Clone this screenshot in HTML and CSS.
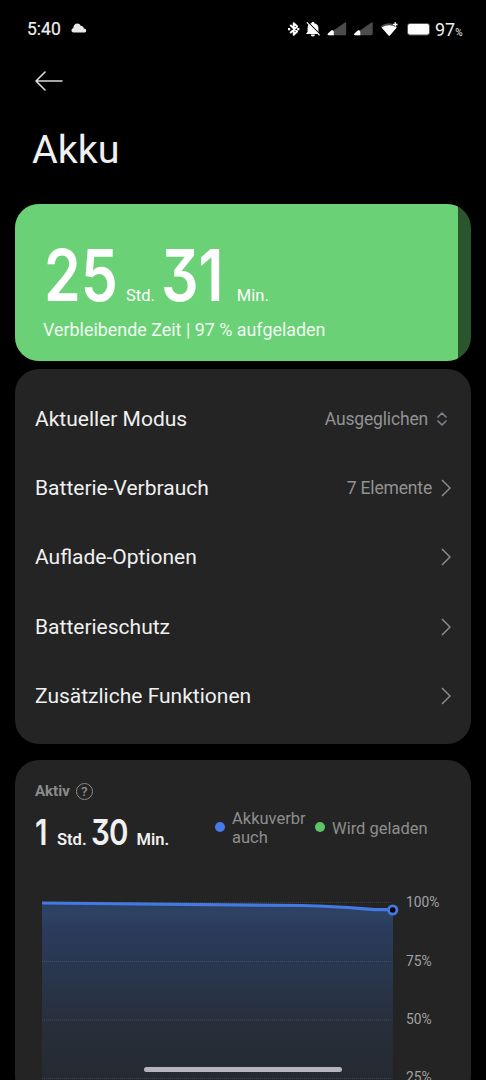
FILE: index.html
```html
<!DOCTYPE html>
<html lang="de">
<head>
    <meta charset="UTF-8">
    <meta name="viewport" content="width=device-width, initial-scale=1.0">
    <title>Akku</title>
    <link rel="stylesheet" href="styles.css">
</head>
<body>
    <div class="statusbar">
        <span class="time">5:40</span>
        <svg class="cloud" width="16" height="10" viewBox="0 0 16 10">
            <path d="M2.500 9.500C-.3 9.500 0 5.800 2.200 5.300 2.500 2 4 .5 6.300.5c1.700 0 2.700.9 3.300 2.300 2 0 3 1 3.200 2.800 3.200.2 3.200 3.900.2 3.900z" fill="#e8e8e8"/>
        </svg>
        <svg class="status-icons" width="146" height="18" viewBox="0 0 146 18">
            <!-- bluetooth -->
            <path d="M2.200 5l7 6.500L5.700 14.800V3.200L9.200 6.500l-7 6.500" fill="none" stroke="#fff" stroke-width="1.900" stroke-linejoin="round"/>
            <path d="M0 8h2.200v2.200H0zM9.200 8h2.200v2.200H9.200z" fill="#fff"/>
            <!-- muted bell -->
            <path d="M24.900 1.700a1.500 1.500 0 0 1 1.500 1.500c2.700.6 4 2.400 4 4.800v3.700l1.600 2.300H18l1.600-2.300V8c0-2.400 1.100-4.200 3.800-4.800a1.500 1.500 0 0 1 1.500-1.500zM22.800 14.500h4.200a2.100 2.100 0 0 1-4.200 0z" fill="#fff"/>
            <path d="M19.700 1.800l13 13" stroke="#000" stroke-width="1.100"/>
            <path d="M18.800 2.400l12.800 13" stroke="#fff" stroke-width="1.200"/>
            <!-- signal -->
            <path d="M40 14.200L57 2.500q1.200-.8 1.200.8V14q0 1.200-1.200 1.200H41q-2 0-1-1z" fill="#4c4c4c"/>
            <path d="M40.200 13.300l3.300-3q2.300-.5 2.300 1.700v3.200H41q-2.500 0-.8-1.900z" fill="#fff"/>
            <path d="M66.500 14.200L83.500 2.500q1.200-.8 1.200.8V14q0 1.200-1.200 1.200h-16q-2 0-1-1z" fill="#4c4c4c"/>
            <path d="M66.700 13.300l3.300-3q2.300-.5 2.300 1.700v3.200h-4.800q-2.500 0-.8-1.900z" fill="#fff"/>
            <!-- wifi -->
            <path d="M92.500 6.200Q101 .5 109 6.200L101.900 15q-.7.700-1.400 0z" fill="#4c4c4c"/>
            <path d="M93.600 7.500q7.500-4.500 15.200 0L101.900 15.400q-.7.700-1.400 0z" fill="#fff"/>
            <path d="M107.300 2v4.500M105 4.500h5" stroke="#000" stroke-width="2.200"/>
            <path d="M107.300 2.200v4.500M105 4.500h4.500" stroke="#fff" stroke-width="1.400"/>
            <!-- battery -->
            <rect x="119" y="2.900" width="23" height="12.600" rx="3.500" fill="#555"/>
            <rect x="120" y="4" width="21" height="10.400" rx="1.800" fill="#fff"/>
        </svg>
        <span class="charge">97<small>%</small></span>
    </div>

    <header>
        <svg class="back" width="28" height="20" viewBox="0 0 28 20">
            <path d="M10 1L1 10l9 9M1 10h26" fill="none" stroke="#dcdcdc" stroke-width="1.600" stroke-linecap="round" stroke-linejoin="round"/>
        </svg>
        <h1>Akku</h1>
    </header>

    <section class="battery">
        <div class="level">
            <div class="remaining">
                <span class="digits hours">25</span>
                <span class="unit">Std.</span>
                <span class="digits minutes">31</span>
                <span class="unit">Min.</span>
            </div>
            <p>Verbleibende Zeit | 97 % aufgeladen</p>
        </div>
    </section>

    <ul class="card menu">
        <li>
            <span>Aktueller Modus</span>
            <span class="value">Ausgeglichen</span>
            <svg class="updown" width="10" height="14" viewBox="0 0 10 14">
                <path d="M1 5l4-4 4 4M1 9l4 4 4-4" fill="none" stroke="#81838f" stroke-width="1.600" stroke-linecap="round" stroke-linejoin="round"/>
            </svg>
        </li>
        <li>
            <span>Batterie-Verbrauch</span>
            <span class="value">7 Elemente</span>
            <svg class="chevron" width="10" height="18" viewBox="0 0 10 18"><path d="M1 1l8 8-8 8"/></svg>
        </li>
        <li>
            <span>Auflade-Optionen</span>
            <svg class="chevron" width="10" height="18" viewBox="0 0 10 18"><path d="M1 1l8 8-8 8"/></svg>
        </li>
        <li>
            <span>Batterieschutz</span>
            <svg class="chevron" width="10" height="18" viewBox="0 0 10 18"><path d="M1 1l8 8-8 8"/></svg>
        </li>
        <li>
            <span>Zusätzliche Funktionen</span>
            <svg class="chevron" width="10" height="18" viewBox="0 0 10 18"><path d="M1 1l8 8-8 8"/></svg>
        </li>
    </ul>

    <section class="card usage">
        <div class="label">
            <span>Aktiv</span>
            <span class="help">?</span>
        </div>
        <div class="summary">
            <div class="active-time">
                <span class="digits one">1</span>
                <span class="unit">Std.</span>
                <span class="digits two">30</span>
                <span class="unit">Min.</span>
            </div>
            <div class="legend">
                <i class="dot blue"></i>
                <span class="used">Akkuverbr<br>auch</span>
                <i class="dot green"></i>
                <span>Wird geladen</span>
            </div>
        </div>
        <svg class="chart" width="456" height="200" viewBox="15 880 456 200">
            <defs>
                <linearGradient id="fill" gradientUnits="userSpaceOnUse" x1="0" y1="903" x2="0" y2="1090">
                    <stop offset="0" stop-color="#2b3e62"/>
                    <stop offset=".06" stop-color="#2e4364"/>
                    <stop offset=".13" stop-color="#2a3b5c"/>
                    <stop offset=".35" stop-color="#29374e"/>
                    <stop offset=".65" stop-color="#272f3b"/>
                    <stop offset="1" stop-color="#252930"/>
                </linearGradient>
            </defs>
            <path d="M42 903L302 905.500Q335 906 365 909L393 910V1080H42z" fill="url(#fill)"/>
            <g stroke="#fff" stroke-opacity=".12" stroke-dasharray="1 1">
                <path d="M42 902.500h350M42 961.500h350M42 1020h350M42 1078.500h350"/>
            </g>
            <path d="M42 903L302 905.500Q335 906.300 362 908.700L375 909.700H393" fill="none" stroke="#4479e2" stroke-width="3.200"/>
            <circle cx="392.700" cy="910" r="4.200" fill="#05070d" stroke="#4479e2" stroke-width="2.800"/>
            <g class="scale">
                <text x="406" y="906.500">100%</text>
                <text x="406" y="965.500">75%</text>
                <text x="406" y="1024">50%</text>
                <text x="406" y="1082">25%</text>
            </g>
        </svg>
    </section>

    <div class="home-bar"></div>
</body>
</html>
```
FILE: styles.css
```css
* {
    box-sizing: border-box;
}
html {
    overflow: hidden;
    background: #000;
}
body {
    margin: 0;
    height: 1080px;
    overflow: hidden;
    position: relative;
    background: #000;
    color: #f0f0f0;
    font-family: Roboto, sans-serif;
}
.statusbar {
    display: flex;
    align-items: center;
    height: 58px;
    padding-left: 27px;
    font-size: 18px;
    color: #eee;
}
.cloud {
    margin-top: -2px;
}
.time {
    width: 44px;
    font-size: 17.5px;
    -webkit-text-stroke: .2px #eee;
}
.status-icons {
    margin-left: 201px;
}
.charge {
    margin-left: 1px;
}
.charge small {
    font-size: 10px;
}
header {
    height: 146px;
    padding: 13px 0 0 33px;
}
.back {
    display: block;
    margin-left: 2px;
}
h1 {
    margin: 35px 0 0 -1px;
    font-size: 39.5px;
    line-height: 48px;
    font-weight: 400;
}
.battery {
    height: 157px;
    margin: 0 15px 8px;
    border-radius: 24px;
    overflow: hidden;
    background: #2b552d;
}
.level {
    width: 443px;
    height: 100%;
    padding: 39px 0 0 28px;
    background: #6bd177;
    color: #fff;
}
.level p {
    margin: 12px 0 0;
    font-size: 17.9px;
    line-height: 22px;
    color: #f0fbf1;
}
.remaining,
.active-time {
    display: flex;
    align-items: baseline;
}
.remaining {
    height: 64px;
    line-height: 64px;
    font-size: 16.5px;
}
/* narrow numerals with a flat-topped three */
.digits {
    font-family: Inter, sans-serif;
    font-feature-settings: "cv09";
    transform: scaleX(.83);
    transform-origin: 0 0;
    white-space: nowrap;
}
.remaining .digits {
    font-size: 71px;
    font-weight: 600;
}
.hours {
    width: 82px;
    margin-left: 1px;
}
.minutes {
    width: 76px;
    margin-left: 6px;
}
.card {
    margin: 0 15px;
    border-radius: 24px;
    background: #242424;
}
.menu {
    height: 375px;
    padding: 15px 20px 0;
    list-style: none;
    font-size: 21px;
}
.menu li {
    display: flex;
    align-items: center;
    height: 69.3px;
}
.menu li span:first-child {
    margin-right: auto;
}
.value {
    font-size: 17.5px;
    letter-spacing: -.17px;
    color: #929292;
    margin-right: 9px;
}
.updown {
    margin-right: 4px;
}
.chevron {
    fill: none;
    stroke: #8c8c8c;
    stroke-width: 1.5;
}
.usage {
    height: 340px;
    margin-top: 16px;
}
.label {
    display: flex;
    align-items: center;
    height: 18px;
    margin-left: 20px;
    position: relative;
    top: 22px;
    font-size: 15px;
    font-weight: 700;
    color: #8c8c8c;
}
.help {
    width: 17px;
    height: 17px;
    margin-left: 6px;
    border: 1.5px solid #8c8c8c;
    border-radius: 50%;
    font-size: 13.5px;
    line-height: 15px;
    font-weight: 500;
    text-align: center;
}
.summary {
    display: flex;
    height: 102px;
    padding: 30px 0 0 20px;
}
.active-time {
    width: 181px;
    height: 50px;
    line-height: 50px;
    font-size: 16.5px;
    font-weight: 600;
}
.active-time .digits {
    font-size: 35.5px;
    font-weight: 600;
}
.one {
    width: 22px;
}
.two {
    width: 46px;
    margin-left: 4px;
    letter-spacing: -1px;
}
.legend {
    display: flex;
    align-items: center;
    height: 40px;
    font-size: 16.5px;
    line-height: 19px;
    color: #8e8e8e;
}
.dot {
    width: 10px;
    height: 10px;
    margin: -2px 7px 0 -1px;
    border-radius: 50%;
}
.blue {
    background: #477bea;
}
.green {
    background: #5dc565;
}
.used {
    width: 84px;
}
.chart {
    display: block;
}
.scale {
    fill: #a2a2a2;
    font-size: 13.8px;
}
.home-bar {
    position: absolute;
    left: 144px;
    top: 1067px;
    width: 198px;
    height: 5px;
    border-radius: 3px;
    background: #b6b5bb;
}
```
